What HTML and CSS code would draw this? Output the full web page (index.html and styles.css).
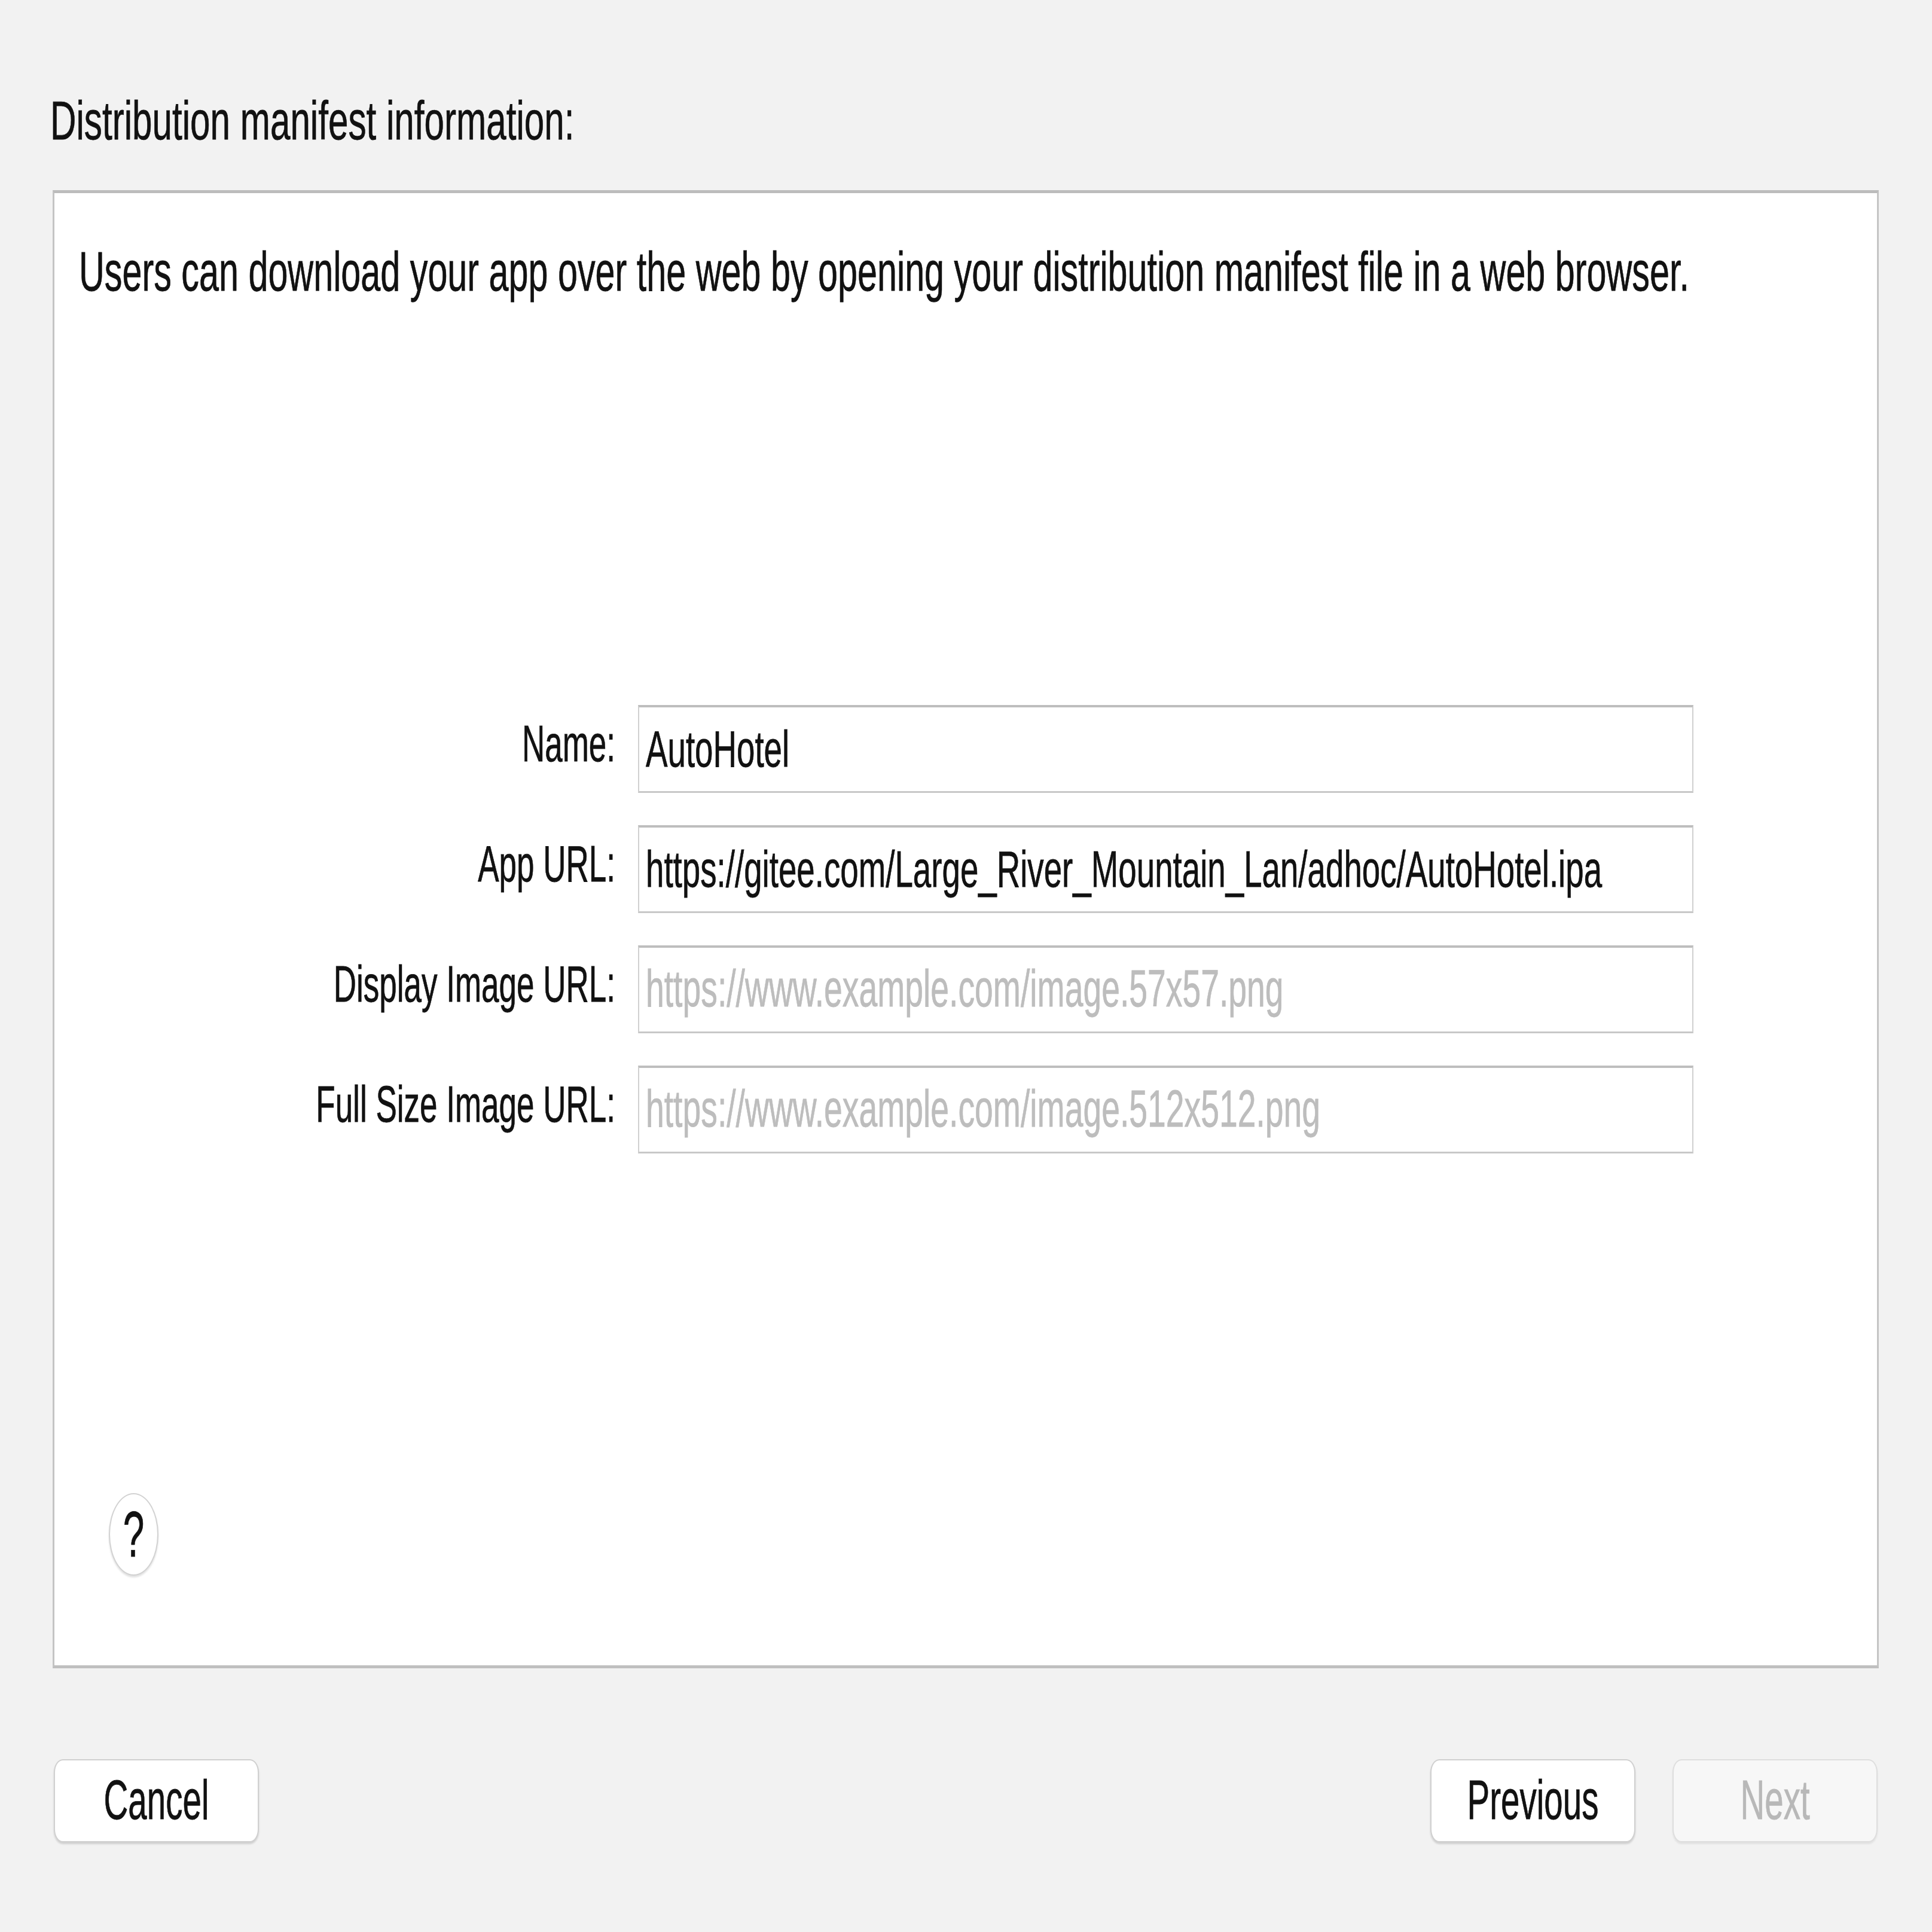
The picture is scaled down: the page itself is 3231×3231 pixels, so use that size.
FILE: index.html
```html
<!DOCTYPE html>
<html lang="en">
<head>
<meta charset="utf-8">
<title>Distribution manifest information</title>
<link rel="stylesheet" href="styles.css">
</head>
<body>
<div class="page">
  <h1 class="title"><span class="t">Distribution manifest information:</span></h1>
  <div class="panel">
    <p class="desc"><span class="t">Users can download your app over the web by opening your distribution manifest file in a web browser.</span></p>
    <div class="form">
      <div class="lbl"><span class="t">Name:</span></div>
      <div class="field"><span class="t">AutoHotel</span></div>
      <div class="lbl"><span class="t">App URL:</span></div>
      <div class="field"><span class="t">https://gitee.com/Large_River_Mountain_Lan/adhoc/AutoHotel.ipa</span></div>
      <div class="lbl"><span class="t">Display Image URL:</span></div>
      <div class="field ph"><span class="t">https://www.example.com/image.57x57.png</span></div>
      <div class="lbl"><span class="t">Full Size Image URL:</span></div>
      <div class="field ph"><span class="t">https://www.example.com/image.512x512.png</span></div>
    </div>
    <div class="help"><span class="t">?</span></div>
  </div>
  <div class="footer">
    <div class="btn"><span class="t">Cancel</span></div>
    <div class="spacer"></div>
    <div class="btn"><span class="t">Previous</span></div>
    <div class="btn disabled"><span class="t">Next</span></div>
  </div>
</div>
</body>
</html>
```

FILE: styles.css
```css
body {
  margin: 0;
  background: #f2f2f2;
  font-family: "Liberation Sans", Arial, sans-serif;
  color: #111111;
}

.page {
  width: 3231px;
  height: 3231px;
  box-sizing: border-box;
  padding: 173px 89px 0 88px;
}

.t {
  display: inline-block;
  white-space: nowrap;
  line-height: 1;
  transform: scaleY(1.56);
  transform-origin: 50% 50%;
  -webkit-text-stroke: 0.5px currentColor;
}

.title {
  margin: 0 0 0 -4px;
  font-size: 60.2px;
  font-weight: normal;
  line-height: 1;
  height: 60px;
}

.title .t {
  transform: scaleY(1.51);
}

.panel {
  margin-top: 85px;
  height: 2472px;
  box-sizing: border-box;
  background: #ffffff;
  border: 3px solid #c4c4c4;
  border-top: 5px solid #bcbcbc;
  border-bottom: 5px solid #bfbfbf;
  display: flex;
  flex-direction: column;
  align-items: flex-start;
}

.desc {
  margin: 102px 0 0 41px;
  font-size: 59.3px;
  line-height: 1;
  height: 59px;
}

.form {
  margin: 695px 0 0 41px;
  display: grid;
  grid-template-columns: 897px 1765px;
  column-gap: 38px;
  row-gap: 54px;
}

.lbl {
  align-self: center;
  text-align: right;
  font-size: 53px;
  line-height: 1;
  margin-top: -18px;
}

.lbl .t {
  transform: scaleY(1.61);
}

.field {
  height: 147px;
  box-sizing: border-box;
  border: 2px solid #d0d0d0;
  border-top: 4px solid #bebebe;
  border-bottom: 3px solid #c8c8c8;
  display: flex;
  align-items: center;
  padding-left: 11px;
  font-size: 54.7px;
  line-height: 1;
  background: #ffffff;
}

.field.ph {
  color: #bdbdbd;
  font-size: 55.3px;
}

.help {
  margin: auto 0 150px 91px;
  width: 83px;
  height: 138px;
  box-sizing: border-box;
  border: 2px solid #d2d2d2;
  border-radius: 50%;
  box-shadow: 0 3px 3px rgba(0, 0, 0, 0.12);
  background: #ffffff;
  display: flex;
  align-items: center;
  justify-content: center;
  font-size: 64px;
  line-height: 1;
}

.help .t {
  transform: scaleY(1.68);
}

.footer {
  margin-top: 152px;
  padding: 0 2px;
  display: flex;
  gap: 62px;
}

.spacer {
  flex: 1;
}

.btn {
  width: 343px;
  height: 139px;
  box-sizing: border-box;
  background: #ffffff;
  border: 2px solid #d0d0d0;
  border-radius: 15px / 22px;
  box-shadow: 0 3px 3px rgba(0, 0, 0, 0.14);
  display: flex;
  align-items: center;
  justify-content: center;
  font-size: 56.5px;
  line-height: 1;
}

.btn .t {
  transform: scaleY(1.65);
}

.btn.disabled {
  background: #f7f7f7;
  border-color: #dedede;
  color: #b8b8b8;
  box-shadow: 0 3px 3px rgba(0, 0, 0, 0.07);
}
```
